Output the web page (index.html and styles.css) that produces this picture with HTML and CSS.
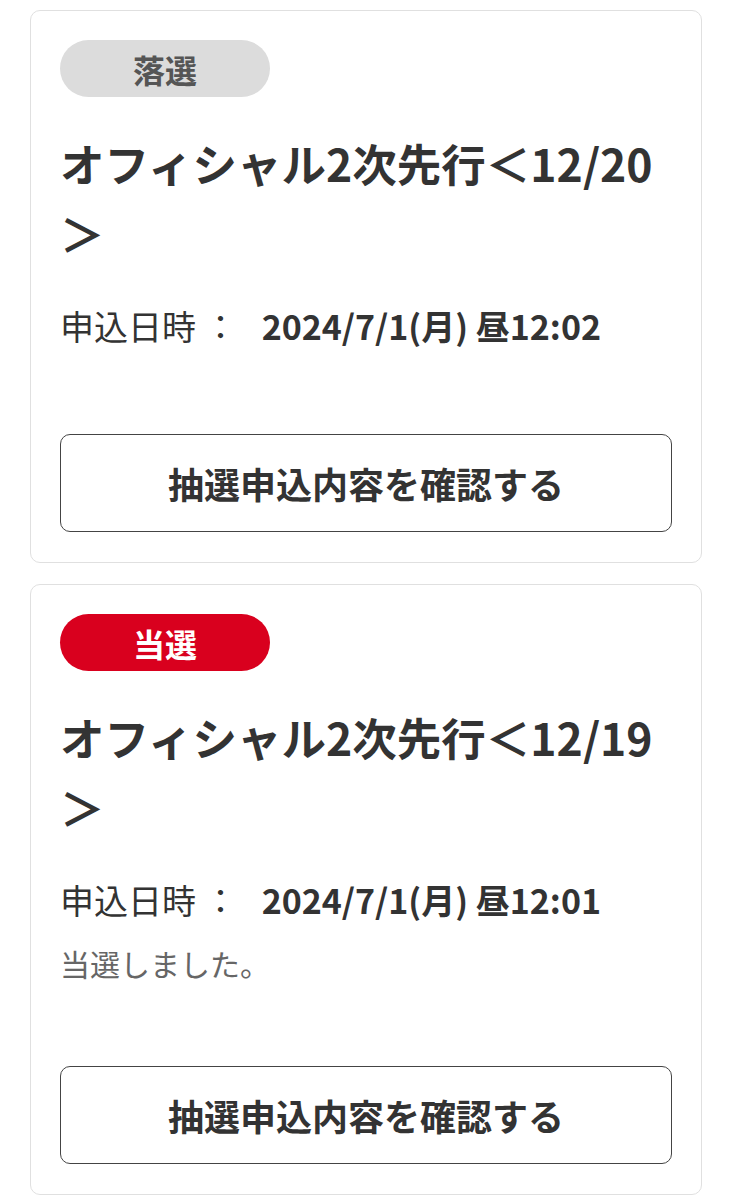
FILE: index.html
```html
<!DOCTYPE html>
<html lang="ja">

<head>
    <meta charset="UTF-8">
    <meta name="viewport" content="width=device-width, initial-scale=1.0">
    <title>抽選申込履歴</title>
    <link rel="stylesheet" href="styles.css">
</head>

<body>
    <div class="list">
        <div class="card">
            <div class="badge lose">落選</div>
            <h2 class="title">オフィシャル2次先行＜12/20＞</h2>
            <div class="row">
                <span class="label">申込日時 ：</span>
                <span class="value">2024/7/1(月) 昼12:02</span>
            </div>
            <div class="button">
                <button type="button">抽選申込内容を確認する</button>
            </div>
        </div>

        <div class="card">
            <div class="badge win">当選</div>
            <h2 class="title">オフィシャル2次先行＜12/19＞</h2>
            <div class="row">
                <span class="label">申込日時 ：</span>
                <span class="value">2024/7/1(月) 昼12:01</span>
            </div>
            <p class="message">当選しました。</p>
            <div class="button">
                <button type="button">抽選申込内容を確認する</button>
            </div>
        </div>
    </div>
</body>

</html>
```

FILE: styles.css
```css
* {
    padding: 0;
    margin: 0;
    box-sizing: border-box;
    font-family: 'Noto Sans CJK JP', 'Noto Sans', sans-serif;
}

body {
    background: #fff;
    color: #333;
}

.list {
    display: flex;
    flex-direction: column;
    gap: 21px;
    padding: 10px 29px 0 30px;
}

.card {
    border: 1.5px solid #e0e0e0;
    border-radius: 10px;
    padding: 29px 29px 30px 29px;
}

.badge {
    width: 210px;
    height: 57px;
    border-radius: 29px;
    display: flex;
    justify-content: center;
    align-items: center;
    font-size: 32px;
    font-weight: bold;
}

.lose {
    background: #dcdcdc;
    color: #555;
}

.win {
    background: #d9001e;
    color: #fff;
}

.title {
    margin-top: 31px;
    font-size: 44.5px;
    line-height: 70px;
    font-weight: bold;
    color: #333;
}

.row {
    margin-top: 34px;
    display: flex;
    align-items: baseline;
    line-height: 48px;
}

.label {
    font-size: 34px;
    color: #333;
    margin-right: 24px;
}

.value {
    font-size: 34px;
    font-weight: bold;
    color: #333;
}

.message {
    margin-top: 20px;
    font-size: 30px;
    line-height: 38px;
    color: #666;
}

.button {
    margin-top: 84px;
}

button {
    width: 100%;
    height: 98px;
    border: 1.5px solid #444;
    border-radius: 10px;
    background: #fff;
    font-size: 36px;
    font-weight: bold;
    color: #333;
}
```
